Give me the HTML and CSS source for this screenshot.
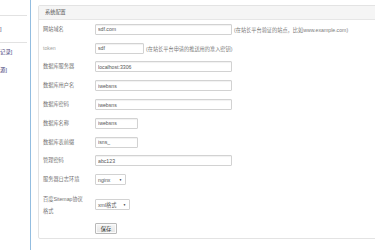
FILE: index.html
```html
<!DOCTYPE html>
<html lang="zh-CN">
<head>
<meta charset="utf-8">
<title>系统配置</title>
<link rel="stylesheet" href="styles.css">
</head>
<body>
<div class="page">
  <aside class="side">
    <div class="side-head"></div>
    <div class="side-item first"><a href="#">]</a></div>
    <div class="side-item"><a href="#">记录]</a></div>
    <div class="side-item"><a href="#">源]</a></div>
  </aside>
  <div class="divider"></div>
  <main class="main">
    <section class="panel">
      <div class="panel-head">系统配置</div>
      <form class="panel-body">
        <div class="row">
          <label class="lbl">网站域名</label>
          <input class="ipt long" type="text" value="sdf.com">
          <span class="hint">(在站长平台验证的站点，比如www.example.com)</span>
        </div>
        <div class="row">
          <label class="lbl light">token</label>
          <input class="ipt short" type="text" value="sdf">
          <span class="hint">(在站长平台申请的推送用的准入密钥)</span>
        </div>
        <div class="row">
          <label class="lbl">数据库服务器</label>
          <input class="ipt long" type="text" value="localhost:3306">
        </div>
        <div class="row">
          <label class="lbl">数据库用户名</label>
          <input class="ipt long" type="text" value="iwebsns">
        </div>
        <div class="row">
          <label class="lbl">数据库密码</label>
          <input class="ipt long" type="text" value="iwebsns">
        </div>
        <div class="row">
          <label class="lbl">数据库名称</label>
          <input class="ipt tiny" type="text" value="iwebsns">
        </div>
        <div class="row">
          <label class="lbl">数据库表前缀</label>
          <input class="ipt tiny" type="text" value="isns_">
        </div>
        <div class="row">
          <label class="lbl">管理密码</label>
          <input class="ipt long" type="text" value="abc123">
        </div>
        <div class="row">
          <label class="lbl">服务器日志环境</label>
          <span class="sel w31"><span class="sel-val">nginx</span><span class="arrow">▼</span></span>
        </div>
        <div class="row">
          <label class="lbl two">百度Sitemap协议格式</label>
          <span class="sel w35"><span class="sel-val">xml格式</span><span class="arrow">▼</span></span>
        </div>
        <div class="row btn-row">
          <button class="btn" type="button">保存</button>
        </div>
      </form>
    </section>
  </main>
</div>
</body>
</html>
```

FILE: styles.css
```css
html, body {
  margin: 0;
  padding: 0;
  background: #fff;
  overflow: hidden;
}

body {
  font-family: "Liberation Sans", "Noto Sans CJK SC", sans-serif;
  font-size: 5.2px;
  color: #666;
}

.page {
  display: flex;
  height: 250px;
}

/* sidebar */
.side {
  width: 27px;
  flex: none;
  overflow: hidden;
  margin-right: 3px;
}

.side-head {
  height: 15px;
  border-bottom: 1px solid #e2e2e2;
}

.side-item {
  white-space: nowrap;
  height: 18px;
  display: flex;
  align-items: center;
}

.side-item.first {
  height: 26px;
  border-bottom: 1px solid #e2e2e2;
}

.side-item a {
  color: #3c3a78;
  text-decoration: none;
  font-size: 5.4px;
}

.divider {
  width: 1px;
  flex: none;
  background: #93bde0;
}

/* main */
.main {
  flex: 1;
  padding-left: 7px;
  min-width: 0;
}

.panel {
  margin-top: 5px;
  width: 420px;
  border: 1px solid #e3e3e3;
  border-radius: 2px;
  background: #fff;
}

.panel-head {
  height: 13px;
  line-height: 13px;
  padding-left: 6px;
  background: #f5f5f5;
  border-bottom: 1px solid #e6e6e6;
  color: #555;
}

.panel-body {
  padding-left: 4px;
  margin: 0;
}

.row {
  display: flex;
  align-items: center;
  padding: 3.9px 0;
}

.lbl {
  width: 44px;
  flex: none;
  margin-right: 8px;
  line-height: 11px;
  color: #707070;
}

.lbl.two {
  line-height: 12px;
}

.lbl.light {
  color: #a0a0a0;
}

.ipt {
  box-sizing: border-box;
  height: 11px;
  margin: 0;
  padding: 0 2px;
  border: 1px solid #d2d2d2;
  border-radius: 1px;
  box-shadow: inset 0 1px 1px rgba(0, 0, 0, 0.06);
  font-family: inherit;
  font-size: 5.2px;
  color: #555;
  background: #fff;
  outline: none;
}

.ipt.long { width: 137px; }
.ipt.short { width: 49px; }
.ipt.tiny { width: 43px; }

.hint {
  margin-left: 2px;
  color: #7a7a7a;
  white-space: nowrap;
}

.sel {
  position: relative;
  box-sizing: border-box;
  height: 11px;
  display: inline-flex;
  align-items: center;
  padding-left: 2px;
  border: 1px solid #d2d2d2;
  border-radius: 1px;
  background: #fff;
  color: #555;
}

.sel.w31 { width: 31px; }
.sel.w35 { width: 35px; }

.arrow {
  position: absolute;
  right: 3px;
  top: 50%;
  transform: translateY(-50%);
  font-size: 3px;
  line-height: 3px;
  color: #222;
}

.btn-row {
  padding: 2.5px 0 3.5px 52px;
}

.btn {
  box-sizing: border-box;
  width: 22px;
  height: 11px;
  margin: 0;
  padding: 0;
  border: 1px solid #b9b9b9;
  border-radius: 1px;
  background: linear-gradient(#f7f7f7, #e4e4e4);
  box-shadow: inset 0 0 0 1px #fbfbfb;
  font-family: inherit;
  font-size: 5.2px;
  color: #333;
}
```
